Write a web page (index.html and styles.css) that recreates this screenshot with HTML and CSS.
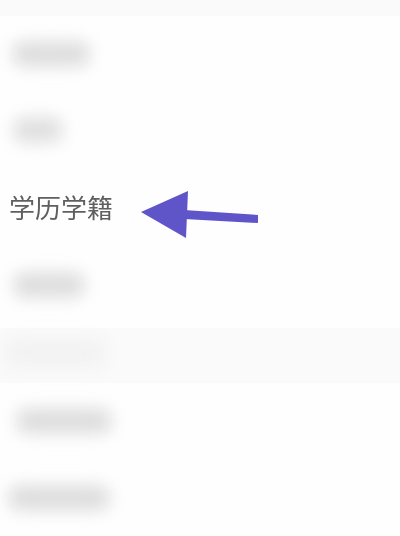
FILE: index.html
```html
<!DOCTYPE html>
<html lang="zh">
<head>
<meta charset="utf-8">
<title>学历学籍</title>
<link rel="stylesheet" href="styles.css">
</head>
<body>
<main class="page">
  <div class="top-strip"></div>
  <div class="row row-a"><span class="smear smear-1"></span></div>
  <div class="row row-a"><span class="smear smear-2"></span></div>
  <div class="row row-b">
    <span class="label">学历学籍</span>
  </div>
  <div class="row row-c"><span class="smear smear-4"></span></div>
  <div class="row row-d"><span class="smear smear-5"></span></div>
  <div class="row row-a"><span class="smear smear-6"></span></div>
  <div class="row row-e"><span class="smear smear-7"></span></div>
  <svg class="arrow" width="400" height="536" viewBox="0 0 400 536" aria-hidden="true">
    <path class="arrow-shape" d="M141 212 L188 191 L186 238 Z"/>
    <path class="arrow-shape" d="M184 210 L258 215 L258 223 L184 219 Z"/>
  </svg>
</main>
</body>
</html>
```
FILE: styles.css
```css
html, body {
  margin: 0;
  padding: 0;
  background: #fefefe;
}

.page {
  position: relative;
  display: flex;
  flex-direction: column;
  width: 400px;
  height: 536px;
  overflow: hidden;
  font-family: "Liberation Sans", "Noto Sans CJK SC", sans-serif;
}

.top-strip {
  height: 16px;
  background: #fafafa;
  flex: none;
}

.row {
  display: flex;
  align-items: center;
  flex: none;
  box-sizing: border-box;
}

.row-a { height: 76px; }
.row-b { height: 79px; padding-left: 9px; padding-top: 3px; }
.row-c { height: 81px; padding-bottom: 6px; }
.row-d { height: 55px; background: #fafafa; padding-bottom: 6px; }
.row-e { height: 78px; }

.label {
  font-size: 26px;
  line-height: 1;
  color: #5f5f5f;
  filter: blur(0.7px);
}

.smear {
  display: block;
  height: 26px;
  border-radius: 12px;
  background: #dedede;
  filter: blur(8px);
}

.smear-1 { width: 78px; margin-left: 12px; }
.smear-2 { width: 50px; margin-left: 13px; background: #e0e0e0; }
.smear-4 { width: 72px; margin-left: 13px; }
.smear-5 { width: 100px; margin-left: 5px; height: 30px; background: #f2f2f2; }
.smear-6 { width: 96px; margin-left: 16px; background: #dedede; }
.smear-7 { width: 102px; margin-left: 8px; background: #dedede; }

.arrow {
  position: absolute;
  top: 0;
  left: 0;
}

.arrow-shape {
  fill: #5f55c9;
}
```
